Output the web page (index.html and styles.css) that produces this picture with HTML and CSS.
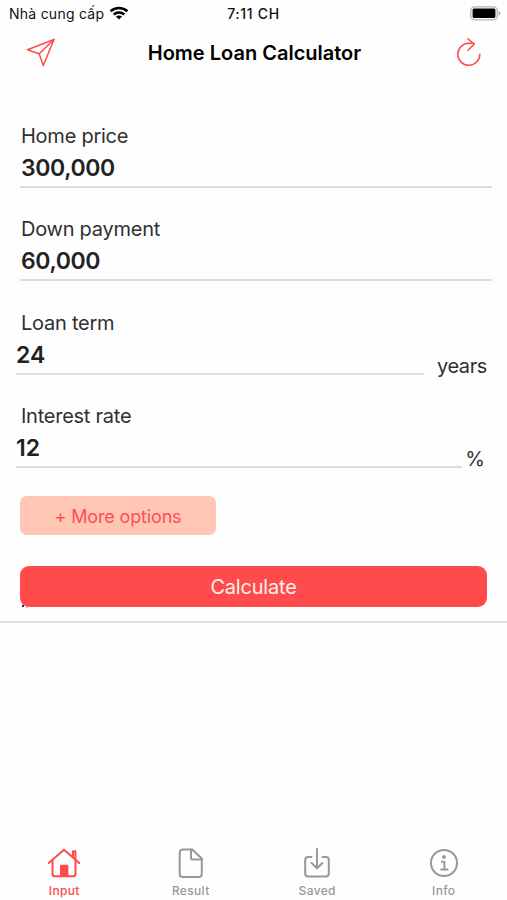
FILE: index.html
```html
<!DOCTYPE html>
<html lang="en">

<head>
    <meta charset="UTF-8">
    <meta name="viewport" content="width=device-width, initial-scale=1.0">
    <title>Home Loan Calculator</title>
    <link rel="stylesheet" href="styles.css">
</head>

<body>
    <div class="status-bar">
        <div class="carrier">
            <span class="carrier-name">Nhà cung cấp</span>
            <svg class="wifi" width="20" height="14" viewBox="0 0 20 14" fill="none" stroke="#000" stroke-width="2.6">
                <path d="M1.6 5.2C6.3.9 13.7.9 18.4 5.2" />
                <path d="M4.7 8.4C7.7 5.8 12.3 5.8 15.3 8.4" />
                <path d="M10 13.6L6.9 10.6C8.6 9.1 11.4 9.1 13.1 10.6Z" fill="#000" stroke="none" />
            </svg>
        </div>
        <div class="time">7:11 CH</div>
        <svg class="battery" width="31" height="15" viewBox="0 0 31 15">
            <rect x=".8" y=".8" width="26.4" height="13" rx="3.6" fill="#fff" stroke="#b5b5b5" stroke-width="1.3" />
            <rect x="2.6" y="2.6" width="22.8" height="9.4" rx="1.6" fill="#000" />
            <path d="M28.6 5.2Q30.4 5.8 30.4 7.3T28.6 9.4Z" fill="#a5a5a5" />
        </svg>
    </div>

    <header class="nav-bar">
        <svg class="nav-icon" width="30" height="30" viewBox="0 0 30 30">
            <path d="M28 1.5L1.5 11.8L13.2 15.8L17.3 27.5Z" />
            <path d="M28 1.5L13.2 15.8" />
        </svg>
        <h1>Home Loan Calculator</h1>
        <svg class="nav-icon" width="26" height="30" viewBox="0 0 26 30">
            <path d="M23.8 16.2A11 11 0 1 1 12.8 5.3L17.8 5.3" />
            <path d="M12 .9L18.2 6.3L12 12.2" />
        </svg>
    </header>

    <main class="form">
        <div class="field">
            <div class="label">Home price</div>
            <div class="row">
                <div class="value">300,000</div>
            </div>
        </div>
        <div class="field">
            <div class="label">Down payment</div>
            <div class="row">
                <div class="value">60,000</div>
            </div>
        </div>
        <div class="field with-unit">
            <div class="label">Loan term</div>
            <div class="row">
                <div class="value">24</div>
                <div class="unit">years</div>
            </div>
        </div>
        <div class="field with-unit percent">
            <div class="label">Interest rate</div>
            <div class="row">
                <div class="value">12</div>
                <div class="unit">%</div>
            </div>
        </div>
        <button type="button" class="more">+ More options</button>
        <button type="button" class="calculate">Calculate</button>
    </main>

    <nav class="tab-bar">
        <div class="tab active">
            <svg width="34" height="32" viewBox="0 0 34 32">
                <path d="M1.8 16L17 2.8L32.2 16" />
                <path d="M5.5 13.5V27Q5.5 29.3 7.8 29.3H26.2Q28.5 29.3 28.5 27V13.5" />
                <path d="M26 10V4.2H28.4V12" />
                <path class="solid" d="M14 18.8H20.4V29H14Z" />
            </svg>
            <span>Input</span>
        </div>
        <div class="tab">
            <svg width="34" height="32" viewBox="0 0 34 32">
                <path d="M9 2.4H18.2L27.8 11.5V26.7Q27.8 30 24.5 30H9Q5.7 30 5.7 26.7V5.7Q5.7 2.4 9 2.4Z" />
                <path d="M17 2.6V10.4Q17 12.6 19.2 12.6H27.6" />
            </svg>
            <span>Result</span>
        </div>
        <div class="tab">
            <svg width="34" height="32" viewBox="0 0 34 32">
                <path d="M11.5 10H8Q5.2 10 5.2 12.8V26.4Q5.2 29.4 8 29.4H26Q28.8 29.4 28.8 26.4V12.8Q28.8 10 26 10H22.5" />
                <path d="M17 2V21M11.6 16L17 21.2L22.4 16" />
            </svg>
            <span>Saved</span>
        </div>
        <div class="tab">
            <svg width="34" height="32" viewBox="0 0 34 32">
                <circle cx="17" cy="16" r="13" />
                <circle class="solid" cx="17" cy="10" r=".9" />
                <path d="M14.8 14.8H17.4V22.4M14.2 22.4H20.6" />
            </svg>
            <span>Info</span>
        </div>
    </nav>
</body>

</html>
```
FILE: styles.css
```css
* {
    box-sizing: border-box;
}

body {
    margin: 0;
    height: 900px;
    display: flex;
    flex-direction: column;
    background: #fefefe;
    color: #303030;
    font-family: Inter, "Liberation Sans", sans-serif;
    overflow: hidden;
}

/* Status bar */

.status-bar {
    height: 27px;
    padding: 0 6px 0 9px;
    display: grid;
    grid-template-columns: 1fr auto 1fr;
    align-items: center;
    color: #111;
    font-size: 14px;
}

.carrier {
    display: flex;
    align-items: center;
    gap: 5px;
}

.carrier-name {
    letter-spacing: 0.25px;
}

.wifi {
    margin-top: -2px;
}

.time {
    margin-right: 3px;
    font-weight: 500;
    letter-spacing: 0.7px;
}

.battery {
    justify-self: end;
}

/* Title and icons */

.nav-bar {
    height: 51px;
    padding: 1px 25px 0 26px;
    display: flex;
    justify-content: space-between;
    align-items: center;
}

.nav-icon {
    fill: none;
    stroke: #ff4b4b;
    stroke-width: 1.5;
    stroke-linejoin: round;
    stroke-linecap: round;
}

h1 {
    margin: 0 3px 0 0;
    color: #000;
    font-size: 20px;
    font-weight: 600;
}

/* Form */

.form {
    height: 545px;
    padding: 45px 15px 0 20px;
    border-bottom: 2px solid #dfe1e0;
}

.field {
    height: 93.3px;
}

.label {
    height: 27px;
    padding-left: 1px;
    font-size: 20px;
    letter-spacing: -0.25px;
    line-height: 27px;
}

.row {
    display: flex;
    align-items: flex-start;
}

.value {
    flex: 1;
    height: 38px;
    padding: 0 1px;
    border-bottom: 2px solid #dcdcdc;
    color: #222;
    font-size: 23px;
    font-weight: 600;
    letter-spacing: -0.4px;
    line-height: 37px;
}

.with-unit .row {
    margin: 0 5px 0 -4px;
}

.with-unit .value {
    padding-left: 0;
    letter-spacing: 0;
}

.unit {
    width: 63px;
    padding-top: 16px;
    font-size: 20px;
    letter-spacing: -0.4px;
    line-height: 27px;
    text-align: right;
}

.percent .unit {
    width: 25px;
    padding-right: 2px;
    letter-spacing: 0;
}

button {
    display: block;
    border: none;
    padding: 1px 0 0;
    font-family: inherit;
}

.more {
    width: 196px;
    height: 39px;
    border-radius: 7px;
    background: #ffc6b3;
    color: #ff4d55;
    font-size: 18px;
    letter-spacing: -0.15px;
}

.calculate {
    position: relative;
    width: 467px;
    height: 41px;
    margin-top: 31px;
    border-radius: 9px;
    background: #ff4b4b;
    color: #fff0ee;
    font-size: 20px;
    letter-spacing: -0.2px;
}

.calculate::before {
    content: "";
    position: absolute;
    left: 2px;
    bottom: 0;
    width: 2px;
    height: 2px;
    background: #333;
    box-shadow: 4px 1px 0 -0.5px #7a2525;
}

/* Bottom tabs */

.tab-bar {
    margin-top: auto;
    height: 53px;
    padding-left: 1px;
    display: grid;
    grid-template-columns: repeat(4, 1fr);
}

.tab {
    display: flex;
    flex-direction: column;
    align-items: center;
    color: #989898;
    font-size: 12px;
    font-weight: 500;
    letter-spacing: 0.35px;
}

.tab svg {
    fill: none;
    stroke: currentColor;
    stroke-width: 2;
    stroke-linejoin: round;
    stroke-linecap: round;
}

.tab .solid {
    fill: currentColor;
}

.tab span {
    margin-top: 4px;
    line-height: 16px;
}

.tab.active {
    color: #ff4b4b;
}
```
